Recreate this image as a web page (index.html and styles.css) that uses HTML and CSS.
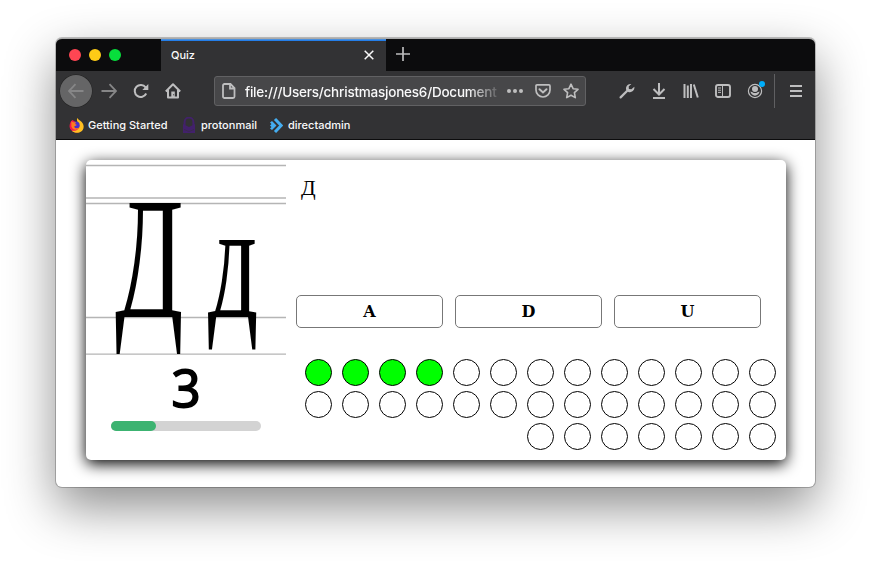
FILE: index.html
```html
<!DOCTYPE html>
<html lang="en">
<head>
<meta charset="utf-8">
<title>Quiz</title>
<link rel="stylesheet" href="styles.css">
</head>
<body>
<div class="window">
  <div class="tabbar">
    <div class="lights"><i class="light red"></i><i class="light yellow"></i><i class="light green"></i></div>
    <div class="tab"><span>Quiz</span>
      <svg width="10" height="10" viewBox="0 0 10 10"><path d="M.7.7l8.600 8.600M9.300.7L.7 9.300" stroke="#f9f9fa" stroke-width="1.500"/></svg>
    </div>
    <svg class="plus" width="14" height="14" viewBox="0 0 14 14"><path d="M7 0v14M0 7h14" stroke="#bcbcbd" stroke-width="1.700"/></svg>
  </div>
  <div class="toolbar">
    <div class="cell back"><svg viewBox="0 0 16 16"><path d="M15.500 8H1M7.500 1.200L.9 8l6.600 6.800"/></svg></div>
    <div class="cell forward"><svg viewBox="0 0 16 16"><path d="M.5 8H15M8.500 1.200L15.100 8l-6.600 6.800"/></svg></div>
    <div class="cell"><svg viewBox="0 0 16 16"><path d="M13.200 10.500A6 6 0 1 1 12.600 4.400" stroke-width="2"/><path d="M15.300 1v6H9.300z" fill="#bebebf" stroke="none"/></svg></div>
    <div class="cell"><svg viewBox="0 0 16 16"><path d="M.8 8.500L8 1.300l7.200 7.200M3 7v7.600h10V7" stroke-width="2" stroke-linejoin="round"/><path d="M6.300 14V8.600h3.500V14z" fill="#bebebf" stroke="none"/><path d="M8.600 11.300v1" stroke="#323234" stroke-width="1"/></svg></div>
    <div class="urlbar">
      <svg viewBox="0 0 16 16"><path d="M3.500 1h6l4 4v8.500a1.500 1.500 0 0 1-1.500 1.500H3.500A1.500 1.500 0 0 1 2 13.500v-11A1.500 1.500 0 0 1 3.500 1zM9 1v4.500h4.500" stroke-width="1.800"/></svg>
      <span class="url">file:///Users/christmasjones6/Document</span>
      <svg class="dots" viewBox="0 0 16 16"><g fill="#bebebf" stroke="none"><circle cx="2" cy="8" r="2"/><circle cx="8" cy="8" r="2"/><circle cx="14" cy="8" r="2"/></g></svg>
      <svg class="pocket" viewBox="0 0 16 16"><path d="M2 1.900h12a1 1 0 0 1 1 1V7a7 7 0 0 1-14 0V2.900a1 1 0 0 1 1-1z" stroke-width="1.700"/><path d="M4.500 6.200L8 9.500l3.500-3.300" stroke-width="2" stroke-linecap="round"/></svg>
      <svg viewBox="0 0 16 16"><path d="M8 1.200l2.100 4.500 4.900.6-3.600 3.400.9 4.900L8 12.200l-4.300 2.400.9-4.900L1 6.300l4.900-.6z" stroke-width="1.600" stroke-linejoin="round"/></svg>
    </div>
    <div class="tools">
      <div class="cell"><svg viewBox="0 0 16 16"><path d="M1.600 14.400L9 7" stroke-width="2.200" stroke-linecap="round"/><path d="M12.300 1A4.500 4.500 0 0 0 7.200 6.800L9.300 8.900A4.500 4.500 0 0 0 15.300 3.700L12.400 6.300 9.900 5.900 9.700 3.600z" fill="#bebebf" stroke="none"/></svg></div>
      <div class="cell"><svg viewBox="0 0 16 16"><path d="M8 0v11M2.500 6L8 11.500 13.500 6M2 15h12" stroke-width="2"/></svg></div>
      <div class="cell"><svg viewBox="0 0 16 16"><path d="M1.500 1v14M4.800 2.500V15M8 1v14M10.800 1.500l4 13" stroke-width="2"/></svg></div>
      <div class="cell"><svg viewBox="0 0 16 16"><rect x="1" y="2" width="14" height="12" rx="2" stroke-width="1.900"/><path d="M7.500 2v12M3 5h3M3 7.200h3M3 9.400h3" stroke-width="1"/></svg></div>
      <div class="cell account"><svg viewBox="0 0 16 16"><circle cx="8" cy="8" r="6.600" stroke-width="1.200"/><g fill="#bebebf" stroke="none"><circle cx="8" cy="6" r="3"/><path d="M3.400 8.500C4.500 14 11.500 14 12.600 8.500L10.500 9.200Q8 11 5.500 9.200z"/></g></svg><i class="badge"></i></div>
    </div>
    <i class="sep"></i>
    <div class="cell"><svg viewBox="0 0 16 16"><path d="M2 3h12M2 8h12M2 13h12" stroke-width="2"/></svg></div>
  </div>
  <div class="bookmarks">
    <svg width="15" height="15" viewBox="0 0 16 16"><path d="M3.500 2C1 4 0 8 1 11c2 5 9 6 12 2L12 7z" fill="#f5174a"/><path d="M9 0c1 1 1 2 3 3 5 3 5 11-1 12.500-3 .8-6 0-8-2 5 1 8-2 8-5C11 5 7 4 9 0z" fill="#ffbf22"/><circle cx="7.600" cy="7.600" r="3.800" fill="#4730ce"/><path d="M2.500 3.500l2 1h3L6.500 6.500l2 1-3 1.500c1 3 4 2 6 .5-2 4.500-8 3.500-9-.5z" fill="#ff7a1f"/></svg>
    <span class="b1">Getting Started</span>
    <svg class="proton" width="12" height="16" viewBox="0 0 12 16"><path d="M1.600 9V5a4.400 4.400 0 0 1 8.800 0v4" fill="none" stroke="#42216b" stroke-width="2"/><path d="M0 7l6 3 6-3v9H0z" fill="#42216b"/><path d="M1 12.500l5 2 5-2" stroke="#323234" fill="none" stroke-width=".5"/></svg>
    <span class="b2">protonmail</span>
    <svg class="da" width="13" height="15" viewBox="0 0 13 15"><path d="M5 1l6.200 6.500L5 14" fill="none" stroke="#45adf0" stroke-width="3"/><path d="M0 4.500l2-1.500 4.500 4.500L2 12l-2-1.500L1.500 9 0 7.500 1.500 6z" fill="#45adf0"/></svg>
    <span class="b3">directadmin</span>
  </div>
  <main class="page">
    <section class="card">
      <div class="letter">
        <svg width="200" height="200" viewBox="0 0 200 200">
          <path d="M0 5.500h200M0 38h200M0 43.500h200M0 157.500h200M0 194.200h200" stroke="#b5b5b5" stroke-width="1.300"/>
          <g class="glyphs"><text transform="translate(29 157) scale(.58 1)" font-size="173">Д</text><text transform="translate(122 157) scale(.59 1)" font-size="168">д</text></g>
        </svg>
        <div class="count">3</div>
        <div class="progress"><div class="fill"></div></div>
      </div>
      <div class="quiz">
        <div class="question">Д</div>
        <div class="answers"><button>A</button><button>D</button><button>U</button></div>
        <div class="marks">
          <i class="done"></i><i class="done"></i><i class="done"></i><i class="done"></i><i></i><i></i><i></i><i></i><i></i><i></i><i></i><i></i><i></i>
          <i></i><i></i><i></i><i></i><i></i><i></i><i></i><i></i><i></i><i></i><i></i><i></i><i></i>
          <i></i><i></i><i></i><i></i><i></i><i></i><i></i>
        </div>
      </div>
    </section>
  </main>
</div>
</body>
</html>
```
FILE: styles.css
```css
* { box-sizing: border-box; }
body { margin: 0; padding: 38px 56px 0; height: 561px; overflow: hidden; background: #fff; font-family: Inter, "Liberation Sans", sans-serif; }
svg { display: block; flex: none; }
.window { width: 759px; height: 449px; border-radius: 6px; overflow: hidden; background: #fff; display: flex; flex-direction: column; border-top: 1px solid #aaa; box-shadow: 0 0 0 1px rgba(0,0,0,.22), 0 20px 50px rgba(0,0,0,.45); }
.tabbar { height: 32px; background: #0c0c0d; display: flex; flex: none; }
.lights { width: 105px; display: flex; gap: 8px; padding: 10px 0 0 13px; }
.light { width: 12px; height: 12px; border-radius: 50%; }
.red { background: #ff4653; }
.yellow { background: #fdcb16; }
.green { background: #07de3c; }
.tab { width: 225px; background: #323234; box-shadow: inset 0 1px #4b8fdc, inset 0 2px #247ee8; display: flex; align-items: center; justify-content: space-between; padding: 0 12px 0 10px; color: #f9f9fa; font-size: 11px; font-weight: 500; }
.plus { margin: 8px 0 0 10px; }
.toolbar { height: 40px; flex: none; background: #323234; display: flex; align-items: center; padding-left: 4px; }
.cell { width: 32px; height: 32px; flex: none; display: flex; align-items: center; justify-content: center; }
.toolbar svg { width: 16px; height: 16px; fill: none; stroke: #bebebf; stroke-width: 1.8; }
.back { background: #656566; border-radius: 50%; box-shadow: 0 0 0 .5px #222; margin-right: 1px; }
.toolbar .back svg, .toolbar .forward svg { stroke: #868687; }
.urlbar { width: 372px; height: 30px; margin-left: 25px; background: #474749; border: 1px solid #616163; border-radius: 3px; display: flex; align-items: center; padding: 0 6px; }
.url { width: 254px; margin: 1px 9px 0 8px; white-space: nowrap; color: #f9f9fa; font-size: 13.5px; font-weight: 500; letter-spacing: -.22px; -webkit-mask-image: linear-gradient(90deg, #000 222px, transparent 258px); mask-image: linear-gradient(90deg, #000 222px, transparent 258px); }
.pocket { margin: 0 12px; }
.tools { display: flex; margin-left: 25px; }
.account { position: relative; }
.badge { position: absolute; left: 20px; top: 6px; width: 6px; height: 6px; border-radius: 50%; background: #00aefb; }
.sep { width: 1px; height: 34px; margin: 0 5px 0 3px; background: #606062; }
.bookmarks { height: 29px; flex: none; background: #323234; border-bottom: 1px solid #0c0c0d; display: flex; align-items: center; padding-left: 13px; color: #f9f9fa; font-size: 11px; font-weight: 500; white-space: nowrap; }
.b1 { margin-left: 4px; width: 80px; }
.proton { margin-left: 15px; }
.b2 { margin-left: 6px; width: 56px; }
.da { margin-left: 13px; }
.b3 { margin-left: 5px; }
.page { padding: 20px 30px; }
.card { width: 700px; height: 300px; background: #fff; border-radius: 5px; display: flex; box-shadow: 0 4px 15px #000; }
.letter { width: 200px; display: flex; flex-direction: column; align-items: center; }
.glyphs { font-family: "Liberation Serif", serif; fill: #000; }
.count { height: 61px; font: 400 51px/55px "Open Sans", sans-serif; color: #000; -webkit-text-stroke: 1.8px #000; stroke-linejoin: round; }
.progress { width: 150px; height: 10px; border-radius: 5px; background: #d3d3d3; }
.fill { width: 30%; height: 10px; border-radius: 5px; background: #3cb371; }
.quiz { width: 500px; padding: 0 10px; }
.question { height: 135px; padding: 16px 0 0 5px; font: 21.5px/25px "Liberation Serif", serif; color: #000; }
.answers { display: flex; gap: 12px; }
.answers button { width: 147px; height: 33px; padding: 0; border: 1px solid #777; border-radius: 5px; background: #fff; color: #000; font: bold 16px "DejaVu Serif", serif; }
.marks { display: flex; flex-wrap: wrap; justify-content: flex-end; gap: 5px 10px; margin-top: 31px; }
.marks i { width: 27px; height: 27px; border: 1px solid #000; border-radius: 50%; }
.marks .done { background: #0f0; }
```
